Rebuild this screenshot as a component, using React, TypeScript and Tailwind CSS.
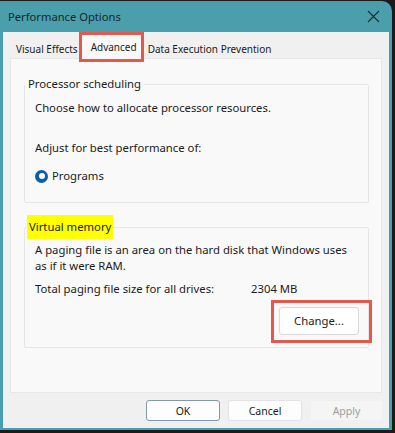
import React from 'react';

const font = { fontFamily: '"Noto Sans", "Liberation Sans", sans-serif' };

const CloseIcon: React.FC = () => (
  <svg width="13" height="13" viewBox="0 0 13 13" fill="none">
    <path d="M1 1 L12 12 M12 1 L1 12" stroke="#1c2b30" strokeWidth="1.1" />
  </svg>
);

const Radio: React.FC = () => (
  <span className="w-[13px] h-[13px] rounded-full bg-[#0a5fa8] flex items-center justify-center">
    <span className="w-[6px] h-[6px] rounded-full bg-white" />
  </span>
);

export default function App() {
  return (
    <div
      className="w-[395px] h-[433px] bg-[#1b1b1b] pt-[1px] pr-[3px] pb-[3px] text-[11.3px] leading-[16px] text-[#1b1b1b]"
      style={font}
    >
      <div className="h-full bg-[#4b9fac] rounded-tr-[10px] flex flex-col px-[3px] pb-[2px]">
        {/* title bar */}
        <div className="h-[31px] shrink-0 flex items-center justify-between pl-[5px] pr-[9px]">
          <span className="text-[11.2px] text-[#14262b]">Performance Options</span>
          <CloseIcon />
        </div>

        <div className="flex-1 bg-[#f0f0f0] flex flex-col">
          {/* tabs */}
          <div className="h-[26px] shrink-0 flex items-start pl-[13px] text-[10px] leading-[14px]">
            <div className="pt-[10px]">Visual Effects</div>
            <div className="ml-[1px] w-[65px] h-[30px] border-[3px] border-[#e3594c] bg-[#f9f9f9] pl-[9px] pt-[5px] relative z-10">
              Advanced
            </div>
            <div className="pl-[4px] pt-[10px]">Data Execution Prevention</div>
          </div>

          {/* tab page */}
          <div className="mx-[7px] h-[335px] shrink-0 bg-[#f9f9f9] border border-[#e8e8e8] px-[13px] pt-[17px]">
            <fieldset className="w-[345px] border border-[#e6e6e6] rounded-[2px] h-[127px] px-[10px]">
              <legend className="px-[3px] ml-[-10px]">Processor scheduling</legend>
              <div className="mt-[8px]">Choose how to allocate processor resources.</div>
              <div className="mt-[24px]">Adjust for best performance of:</div>
              <label className="mt-[12px] flex items-center gap-[4px]">
                <Radio />
                <span>Programs</span>
              </label>
            </fieldset>

            <fieldset className="w-[345px] mt-[12px] border border-[#e6e6e6] rounded-[2px] h-[133px] px-[10px]">
              <legend className="ml-[-8px] bg-[#ffff00] px-[2px] py-[4px]">Virtual memory</legend>
              <div className="mt-[3px] whitespace-nowrap">
                A paging file is an area on the hard disk that Windows uses
                <br />
                as if it were RAM.
              </div>
              <div className="mt-[7px] flex">
                <span className="w-[216px]">Total paging file size for all drives:</span>
                <span>2304 MB</span>
              </div>
              <div className="flex justify-end mt-[3px] mr-[-14px]">
                <div className="border-[3px] border-[#e3594c] pl-[5px] pr-[10px] pt-[4px] pb-[5px]">
                  <button className="w-[80px] h-[28px] bg-white border border-[#d9d9d9] rounded-[3px]">
                    Change...
                  </button>
                </div>
              </div>
            </fieldset>
          </div>

          {/* buttons */}
          <div className="flex-1 flex items-center justify-end gap-[8px] pr-[6px] text-[10.5px]">
            <button className="w-[74px] h-[21px] bg-[#fdfdfd] border border-[#7f98ad] rounded-[3px]">OK</button>
            <button className="w-[74px] h-[21px] bg-[#fdfdfd] border border-[#e3e3e3] rounded-[3px]">Cancel</button>
            <button className="w-[73px] h-[21px] bg-[#f5f5f5] border border-[#f0f0f0] rounded-[3px] text-[#9d9d9d]">
              Apply
            </button>
          </div>
        </div>
      </div>
    </div>
  );
}
